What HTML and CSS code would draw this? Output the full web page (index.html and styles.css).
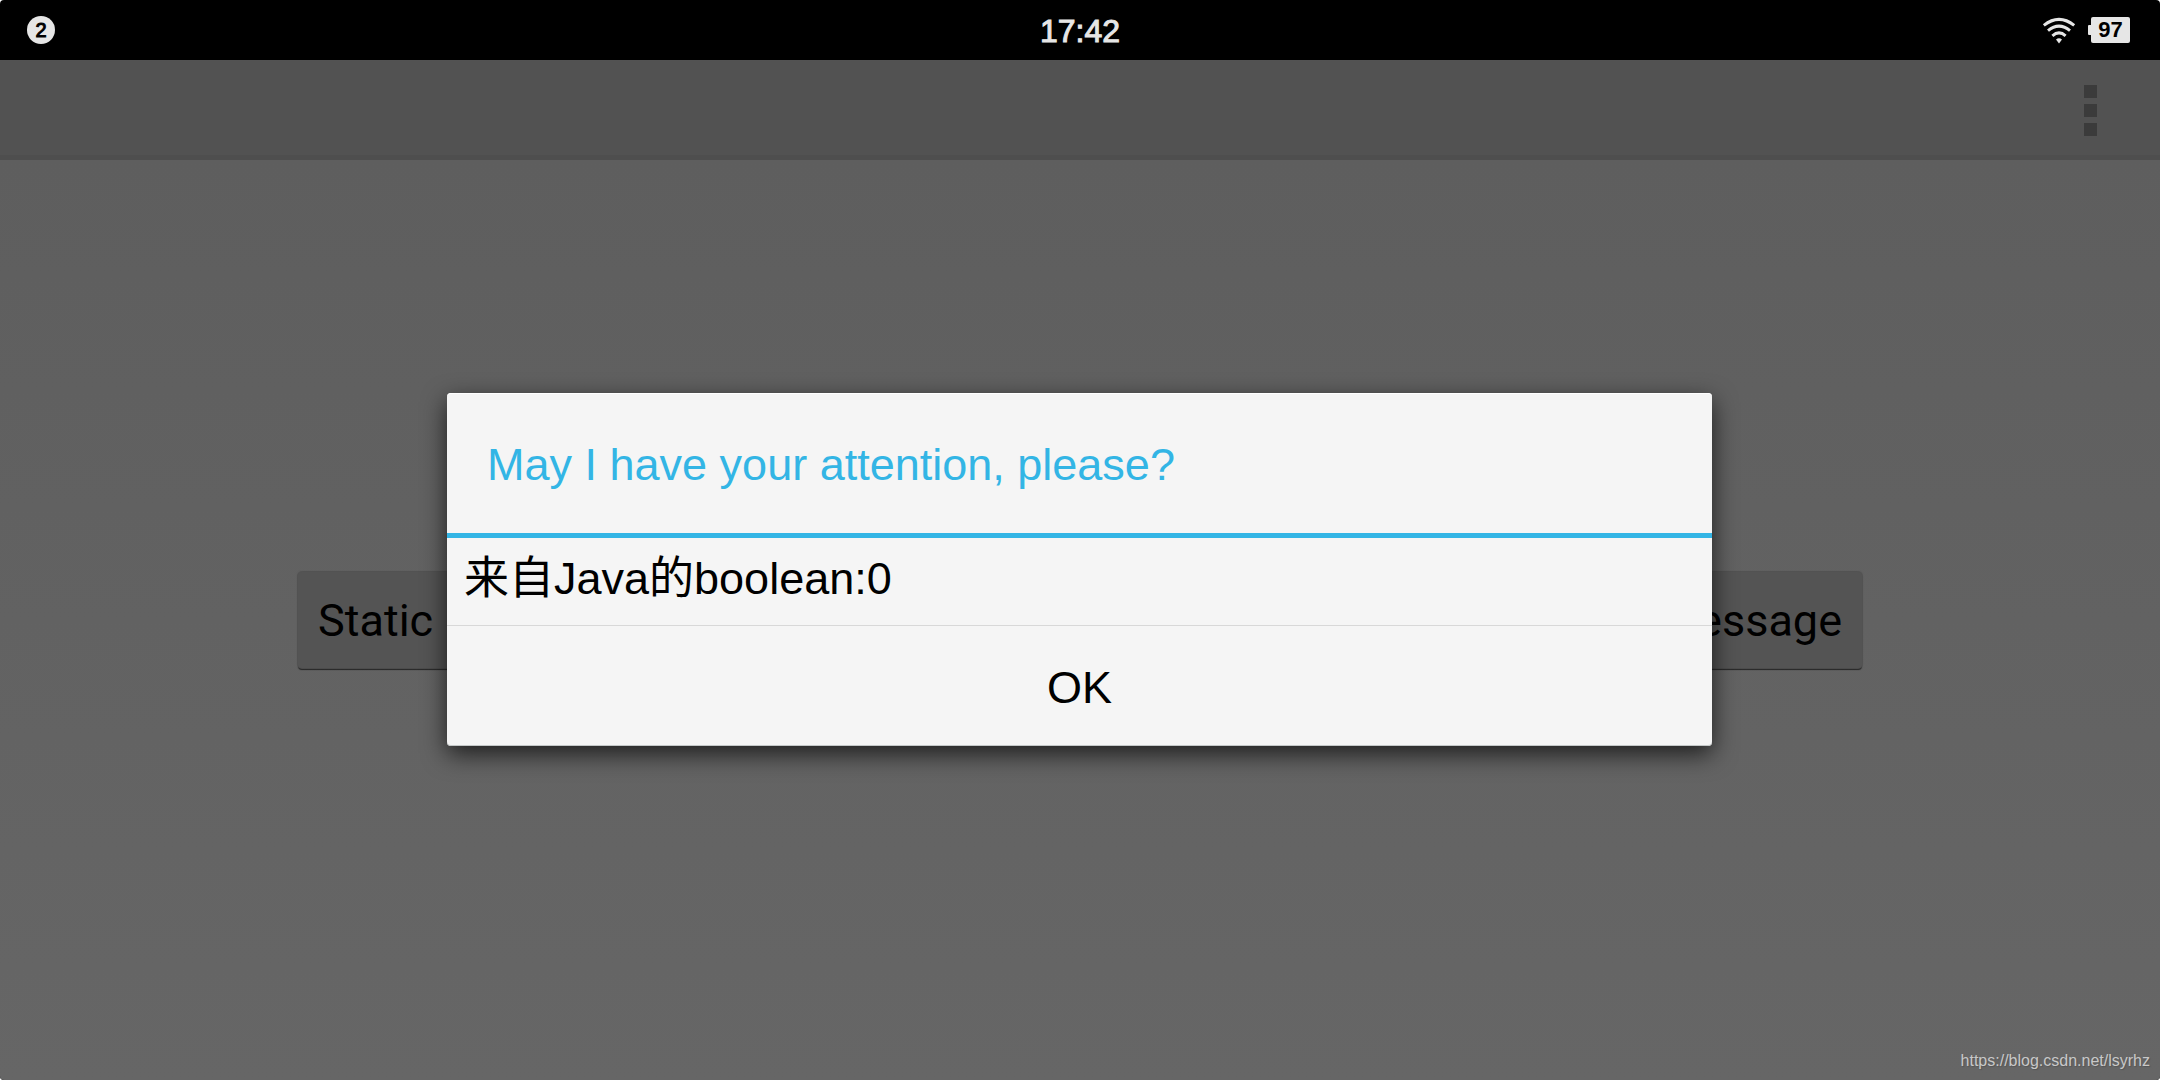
FILE: index.html
```
<!DOCTYPE html>
<html lang="en">
    <head>
        <meta charset="UTF-8">
        <title>Message</title>
        <link rel="stylesheet" href="styles.css">
    </head>
    <body>
        <div class="screen">

            <header class="status-bar">
                <div class="status-left">
                    <span class="badge">2</span>
                </div>
                <div class="clock">17:42</div>
                <div class="status-right">
                    <svg class="wifi" width="34" height="27" viewBox="0 0 34 27" fill="none" stroke="#e6e6e6" stroke-width="3">
                        <path d="M1.8 8.4 Q17 -3.6 32.2 8.4"/>
                        <path d="M6 13.6 Q17 4.6 28 13.6"/>
                        <path d="M10.4 18.8 Q17 13 23.6 18.8"/>
                        <path d="M14 22.6 Q17 20 20 22.6 L17 26.4 Z" fill="#e6e6e6" stroke="none"/>
                    </svg>
                    <div class="battery"><span class="battery-level">97</span></div>
                </div>
            </header>

            <div class="action-bar">
                <button type="button" class="overflow" aria-label="More options">
                    <span class="square"></span>
                    <span class="square"></span>
                    <span class="square"></span>
                </button>
            </div>

            <main class="content">
                <button type="button" class="main-button">Static</button>
                <button type="button" class="main-button main-button-end">Message</button>
            </main>

            <!-- Alert on top of the page -->
            <div class="overlay">
                <div class="alert" role="alertdialog" aria-labelledby="alertTitle" aria-describedby="alertMessage">
                    <h2 class="alert-title" id="alertTitle">May I have your attention, please?</h2>
                    <p class="alert-message" id="alertMessage">来自Java的boolean:0</p>
                    <button type="button" class="alert-ok">OK</button>
                </div>
            </div>

            <a class="blog-link" href="https://blog.csdn.net/lsyrhz">https://blog.csdn.net/lsyrhz</a>
        </div>
    </body>
</html>
```
FILE: styles.css
```
* {
    box-sizing: border-box;
}
body {
    margin: 0;
    background-color: #fff;
    font-family: "Liberation Sans", "Noto Sans CJK SC", sans-serif;
}
button {
    margin: 0;
    padding: 0;
    border: none;
    background: none;
    color: #000;
    cursor: pointer;
}
.screen {
    position: relative;
    display: flex;
    flex-direction: column;
    min-height: 100vh;
    border-radius: 4px;
    overflow: hidden;
    background: #000;
}

/* Status bar */
.status-bar {
    display: grid;
    grid-template-columns: 1fr auto 1fr;
    align-items: center;
    height: 60px;
    padding: 0 30px;
    color: #e6e6e6;
}
.status-left {
    margin-left: -3px;
}
.badge {
    display: block;
    width: 28px;
    height: 28px;
    border-radius: 50%;
    background-color: #e6e6e6;
    color: #000;
    font-size: 20px;
    line-height: 28px;
    text-align: center;
    -webkit-text-stroke: 1px #000;
}
.clock {
    padding-top: 2px;
    font-size: 32px;
    line-height: 36px;
    -webkit-text-stroke: 1px #e6e6e6;
}
.status-right {
    display: flex;
    justify-content: flex-end;
    align-items: center;
    gap: 12px;
}
.wifi {
    display: block;
}
.battery {
    display: flex;
    align-items: center;
}
.battery::before {
    content: "";
    width: 3px;
    height: 10px;
    border-radius: 1px 0 0 1px;
    background-color: #e6e6e6;
}
.battery-level {
    width: 39px;
    border-radius: 2px;
    background-color: #e6e6e6;
    color: #000;
    font-size: 22px;
    font-weight: bold;
    line-height: 26px;
    text-align: center;
}

/* Action bar */
.action-bar {
    display: flex;
    justify-content: flex-end;
    height: 100px;
    padding-right: 63px;
    border-bottom: 5px solid #4e4e4e;
    background-color: #525252;
}
.overflow {
    display: flex;
    flex-direction: column;
    justify-content: center;
    gap: 6px;
    padding-top: 6px;
}
.square {
    width: 13px;
    height: 13px;
    background-color: #3b3b3b;
}

/* Page */
.content {
    flex: 1;
    display: flex;
    align-items: center;
    justify-content: space-between;
    padding: 0 298px;
    background: linear-gradient(#5e5e5e, #666);
}
.main-button {
    height: 96px;
    width: 400px;
    padding: 0 20px;
    border-radius: 4px;
    background-color: #545454;
    box-shadow: 0 0 1px 1px #525252, 0 2px 1px #222;
    font-family: Roboto, sans-serif;
    font-size: 45px;
    text-align: left;
}
.main-button-end {
    text-align: right;
}

/* Alert */
.overlay {
    position: absolute;
    inset: 60px 0 2px;
    display: flex;
    align-items: center;
    padding: 0 448px 0 447px;
}
.alert {
    flex: 1;
    border-radius: 4px;
    background-color: #f5f5f5;
    box-shadow: inset 0 1px #fff, inset 0 -1px #c4c8c8, 0 8px 24px rgba(0, 0, 0, 0.7);
}
.alert-title {
    margin: 0;
    padding: 48px 40px 44px;
    border-bottom: 5px solid #33b5e5;
    color: #33b5e5;
    font-size: 45px;
    font-weight: normal;
    line-height: 48px;
}
.alert-message {
    margin: 0;
    padding: 17px 17px 22px;
    border-bottom: 1px solid #d8d8d8;
    font-size: 45px;
    line-height: 48px;
}
.alert-ok {
    display: block;
    width: 100%;
    height: 120px;
    padding-top: 4px;
    font-family: inherit;
    font-size: 45px;
}

.blog-link {
    position: absolute;
    right: 10px;
    bottom: 10px;
    color: #c8c8c8;
    font-size: 16px;
    line-height: 18px;
    text-decoration: none;
    text-shadow: 1px 1px 1px #555;
}
```
